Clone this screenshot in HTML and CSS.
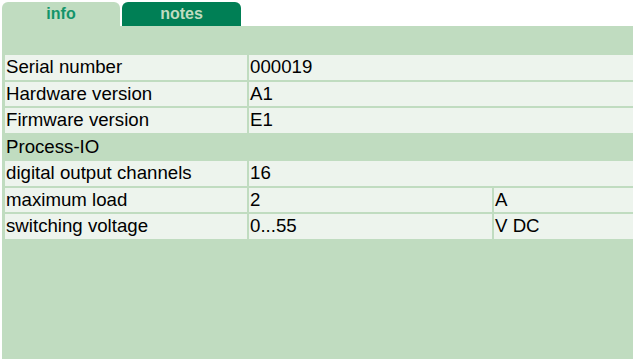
FILE: index.html
```html
<!DOCTYPE html>
<html lang="en">
<head>
    <meta charset="UTF-8">
    <title>Device info</title>
    <link rel="stylesheet" href="styles.css">
</head>
<body>

<div class="tabs">
    <div class="tab active">info</div>
    <div class="tab">notes</div>
</div>

<div class="panel">
    <table class="info-table">
        <colgroup>
            <col class="col-name">
            <col class="col-value">
            <col>
        </colgroup>
        <tr class="item"><td>Serial number</td><td colspan="2">000019</td></tr>
        <tr class="item"><td>Hardware version</td><td colspan="2">A1</td></tr>
        <tr class="item"><td>Firmware version</td><td colspan="2">E1</td></tr>
        <tr class="section"><td colspan="3">Process-IO</td></tr>
        <tr class="item"><td>digital output channels</td><td colspan="2">16</td></tr>
        <tr class="item"><td>maximum load</td><td>2</td><td>A</td></tr>
        <tr class="item"><td>switching voltage</td><td>0...55</td><td>V DC</td></tr>
    </table>
</div>

</body>
</html>
```

FILE: styles.css
```css
html, body {
    margin: 0;
    height: 100%;
    background-color: #ffffff;
    overflow: hidden;
}
body {
    font-family: "Liberation Sans", Arial, sans-serif;
    display: flex;
    flex-direction: column;
}
.tabs {
    display: flex;
    gap: 2px;
    padding: 2px 0 0 2px;
}
.tab {
    height: 24px;
    line-height: 24px;
    text-align: center;
    font-size: 16px;
    font-weight: bold;
    border-radius: 6px 6px 0 0;
    background-color: #007f55;
    color: #c0dcc0;
    width: 119px;
}
.tab.active {
    width: 118px;
    background-color: #c0dcc0;
    color: #13946a;
}
.panel {
    background-color: #c0dcc0;
    margin-left: 2px;
    height: 332px;
    padding-top: 27px;
    overflow: hidden;
}
.info-table {
    border-spacing: 2px;
    margin-left: 1px;
    width: 650px;
    table-layout: fixed;
    font-size: 18.67px;
    color: #000000;
}
.col-name { width: 242px; }
.col-value { width: 243px; }
.info-table td {
    padding: 1px 1px 1px 1px;
    line-height: 22.5px;
    white-space: nowrap;
}
.item td {
    background-color: #edf4ed;
}
.section td {
    background-color: transparent;
}
```
